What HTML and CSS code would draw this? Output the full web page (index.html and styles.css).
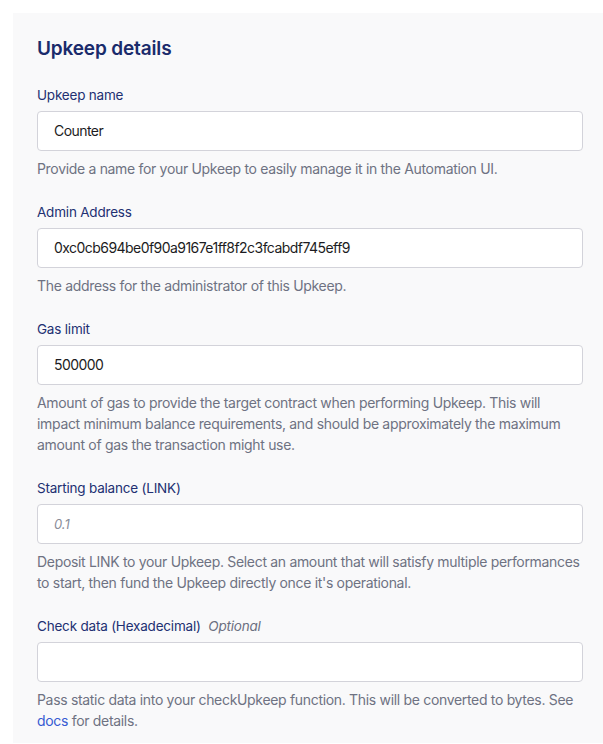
FILE: index.html
```html
<!DOCTYPE html>
<html>
<head>
<meta charset="utf-8">
<link rel="stylesheet" href="styles.css">
</head>
<body>
<div class="panel">
  <h2 class="title">Upkeep details</h2>
  <div class="field">
    <label class="label">Upkeep name</label>
    <div class="input">Counter</div>
    <p class="help">Provide a name for your Upkeep to easily manage it in the Automation UI.</p>
  </div>
  <div class="field">
    <label class="label">Admin Address</label>
    <div class="input">0xc0cb694be0f90a9167e1ff8f2c3fcabdf745eff9</div>
    <p class="help">The address for the administrator of this Upkeep.</p>
  </div>
  <div class="field">
    <label class="label">Gas limit</label>
    <div class="input">500000</div>
    <p class="help">Amount of gas to provide the target contract when performing Upkeep. This will impact minimum balance requirements, and should be approximately the maximum amount of gas the transaction might use.</p>
  </div>
  <div class="field">
    <label class="label">Starting balance (LINK)</label>
    <div class="input placeholder">0.1</div>
    <p class="help">Deposit LINK to your Upkeep. Select an amount that will satisfy multiple performances to start, then fund the Upkeep directly once it's operational.</p>
  </div>
  <div class="field">
    <label class="label">Check data (Hexadecimal) <span class="optional">Optional</span></label>
    <div class="input"></div>
    <p class="help">Pass static data into your checkUpkeep function. This will be converted to bytes. See <a class="link">docs</a> for details.</p>
  </div>
</div>
</body>
</html>
```

FILE: styles.css
```css
html, body {
  margin: 0;
  padding: 0;
  background: #ffffff;
  font-family: Inter, "Noto Sans", sans-serif;
}
body {
  padding: 13px 0 0 13px;
  overflow: hidden;
}
.panel {
  background: #f9f9fa;
  padding: 24px 20px 12px 24px;
}
.title {
  margin: 0 0 24px 0;
  font-size: 19px;
  line-height: 24px;
  font-weight: 600;
  letter-spacing: -0.15px;
  color: #1a2b6b;
}
.field {
  display: flex;
  flex-direction: column;
  margin-bottom: 23px;
}
.field:last-child {
  margin-bottom: 0;
}
.label {
  font-size: 13.5px;
  line-height: 20px;
  letter-spacing: -0.2px;
  color: #223072;
  margin-bottom: 6px;
}
.optional {
  font-style: italic;
  color: #6b6f80;
  margin-left: 4px;
}
.input {
  height: 40px;
  box-sizing: border-box;
  background: #fff;
  border: 1px solid #d3d3da;
  border-radius: 4px;
  padding: 0 16px;
  font-size: 14px;
  line-height: 38px;
  letter-spacing: -0.55px;
  color: #1c1c22;
}
.placeholder {
  font-style: italic;
  color: #8a8d99;
  font-size: 13px;
  letter-spacing: 0;
}
.help {
  margin: 7px 0 0 0;
  font-size: 14px;
  line-height: 21px;
  letter-spacing: -0.32px;
  color: #6e7282;
}
.link {
  color: #375bd2;
}
```
